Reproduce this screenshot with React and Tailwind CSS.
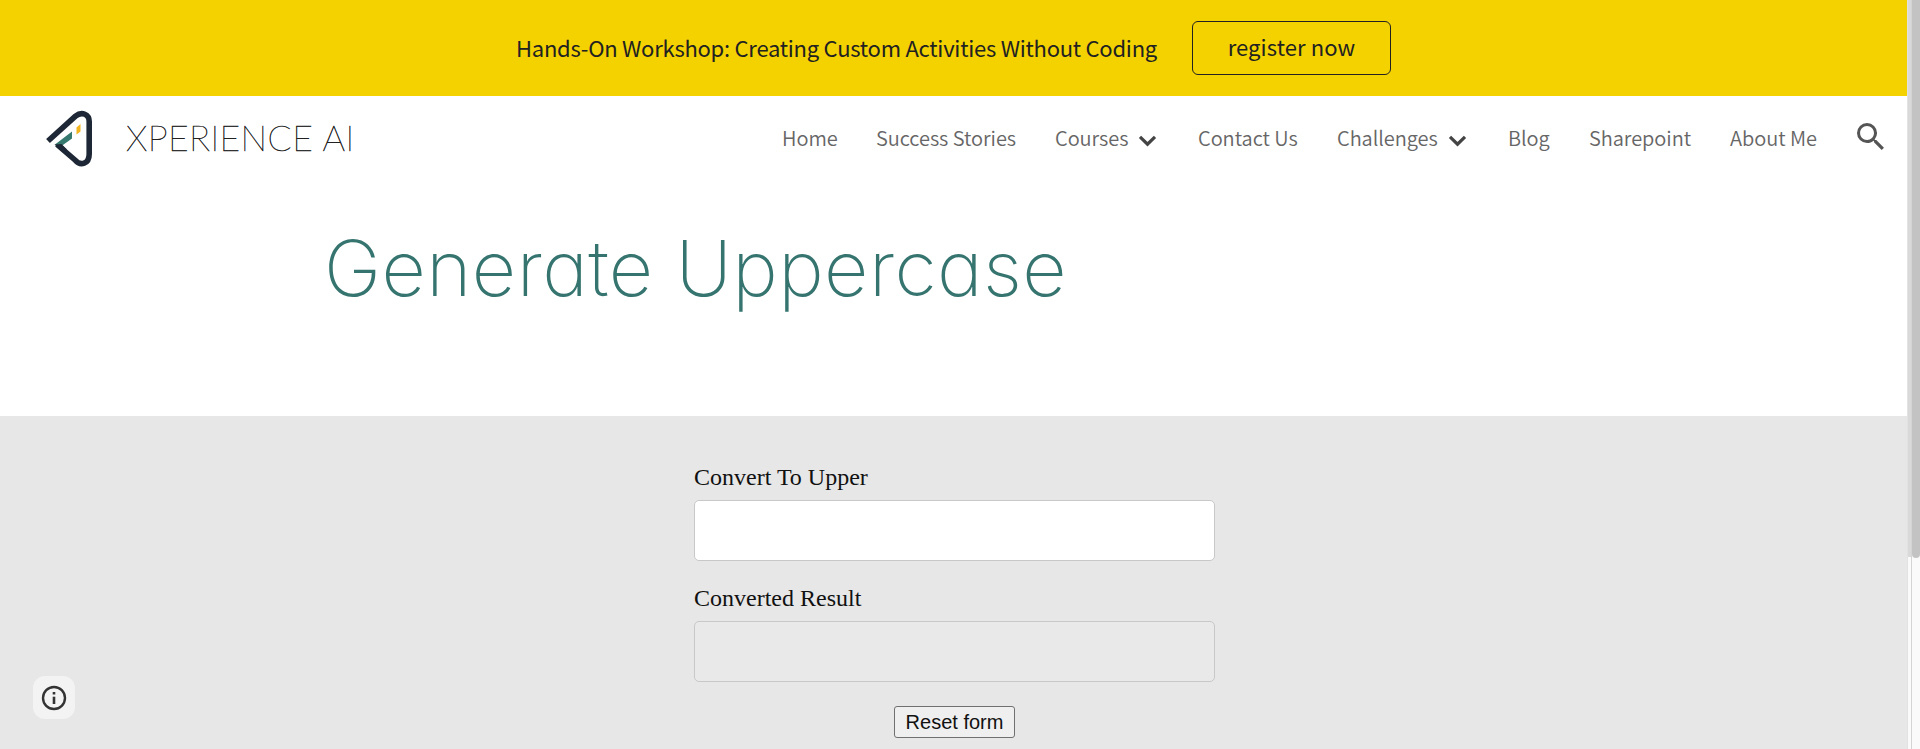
import React from "react";

const navItems = [
  { label: "Home", width: "w-[54px]" },
  { label: "Success Stories", width: "w-[139px]" },
  { label: "Courses", width: "w-[74px]", menu: true },
  { label: "Contact Us", width: "w-[99px]" },
  { label: "Challenges", width: "w-[102px]", menu: true },
  { label: "Blog", width: "w-[41px]" },
  { label: "Sharepoint", width: "w-[101px]" },
  { label: "About Me", width: "w-[87px]" },
];

function Logo() {
  return (
    <svg className="h-[60px] w-[50px] shrink-0" viewBox="0 0 50 60" fill="none">
      <path d="M4 33 L31.5 8.2 C38 2.8 45.2 6.5 45.2 13.5 V46 C45.2 56 36.5 58.5 31 52 L13 36.5" stroke="#1e2735" strokeWidth="5.6" strokeLinejoin="round" />
      <path d="M11 36.5 L28 23.5 V30.5 L17.5 38 L20 42 Z" fill="#35796f" />
      <path d="M10.5 36.5 L17.5 36 L23 41.5 L19 44.5 Z" fill="#1e2735" />
      <path d="M32.5 19.5 L36.5 16 V23.5 L32.5 26.5 Z" fill="#f2b51d" />
    </svg>
  );
}

function Chevron() {
  return (
    <svg className="ml-[9px] mr-px mt-[5px] h-[12px] w-[19px] shrink-0" viewBox="0 0 19 12" fill="none">
      <path d="M2 1.8 L9.5 9.2 L17 1.8" stroke="#444" strokeWidth="3.2" />
    </svg>
  );
}

export default function App() {
  return (
    <div className="flex h-[749px] w-[1920px] overflow-hidden bg-white">
      <div className="flex w-[1907px] shrink-0 flex-col">
        <div className="flex h-24 shrink-0 items-center bg-[#f4d200] pl-[516px] font-['Noto_Sans_CJK_SC',sans-serif] text-[#212121]">
          <span className="w-[676px] whitespace-nowrap pb-[3px] text-[22px] leading-[30px] tracking-[-0.25px]">
            Hands-On Workshop: Creating Custom Activities Without Coding
          </span>
          <button className="flex h-[54px] w-[199px] items-center justify-center rounded-md border border-[#212121] pb-[5px] text-[22px] leading-[30px] tracking-[0.1px]">
            register now
          </button>
        </div>

        <header className="flex h-[84px] shrink-0 items-center">
          <div className="flex w-[782px] shrink-0 items-center pl-[44px]">
            <Logo />
            <span className="ml-8 whitespace-nowrap font-[Lato,sans-serif] text-[35.5px] font-thin leading-[40px] tracking-[0.4px] text-[#212121] [-webkit-text-stroke:0.5px_#212121]">
              XPERIENCE AI
            </span>
          </div>
          <nav className="flex shrink-0 items-center gap-10 font-['Noto_Sans_CJK_SC',sans-serif] text-[20px] font-[350] leading-[30px] tracking-[-0.05px] text-[#666]">
            {navItems.map((item) => (
              <a key={item.label} className="flex items-center">
                <span className={`whitespace-nowrap ${item.width}`}>{item.label}</span>
                {item.menu && <Chevron />}
              </a>
            ))}
          </nav>
          <svg className="-mt-[3px] ml-10 h-[27px] w-[27px] shrink-0" viewBox="3 3 17.5 17.5" fill="#555">
            <path d="M15.5 14h-.79l-.28-.27A6.47 6.47 0 0 0 16 9.5 6.5 6.5 0 1 0 9.5 16c1.61 0 3.09-.59 4.23-1.57l.27.28v.79l5 4.99L20.49 19l-4.99-5zm-6 0C7.01 14 5 11.99 5 9.5S7.01 5 9.5 5 14 7.01 14 9.5 11.99 14 9.5 14z" />
          </svg>
        </header>

        <section className="h-[236px] shrink-0 pl-[324px] pt-9">
          <h1 className="whitespace-nowrap font-[Inter,sans-serif] text-[77px] font-extralight leading-[104px] tracking-[0.45px] text-[#35746f] [font-feature-settings:'cv11']">
            Generate Uppercase
          </h1>
        </section>

        <main className="flex flex-1 items-end bg-[#e7e7e7]">
          <div className="w-[694px]">
            <div className="mb-[30px] ml-[33px] flex h-[43px] w-[42px] items-center justify-center rounded-xl bg-[#f3f3f3]">
              <svg className="h-[26px] w-[26px]" viewBox="0 0 26 26" fill="none">
                <circle cx="13" cy="13" r="11" stroke="#333" strokeWidth="2.4" />
                <path d="M13 11.7 V19" stroke="#333" strokeWidth="2.6" />
                <path d="M13 7 V9.5" stroke="#333" strokeWidth="2.6" />
              </svg>
            </div>
          </div>
          <form className="flex h-full w-[521px] flex-col font-['Liberation_Serif',serif] text-[24px] leading-[28px] text-[#111]">
            <label className="mt-[47px] flex flex-col">
              <span>Convert To Upper</span>
              <input className="mt-[9px] h-[61px] rounded-[5px] border border-[#c8c8c8] bg-white" />
            </label>
            <label className="mt-[23px] flex flex-col">
              <span>Converted Result</span>
              <input disabled className="mt-[9px] h-[61px] rounded-[5px] border border-[#c8c8c8] bg-[#e9e9e9]" />
            </label>
            <button type="button" className="mt-6 flex h-8 w-[121px] items-center justify-center self-center rounded-[3px] border border-[#707070] bg-[#efefef] font-['Liberation_Sans',sans-serif] text-[20px] leading-none">
              Reset form
            </button>
          </form>
        </main>
      </div>
      <div className="flex w-[13px] shrink-0 border-l border-[#e2e2e2] bg-[#fafafa]">
        <div className="h-full w-1 border-r border-[#d4d4d4]">
          <div className="h-[557px] bg-[#d9d9d9]" />
        </div>
        <div className="h-[558px] flex-1 rounded-b-md bg-[#c3c3c3]" />
      </div>
    </div>
  );
}
